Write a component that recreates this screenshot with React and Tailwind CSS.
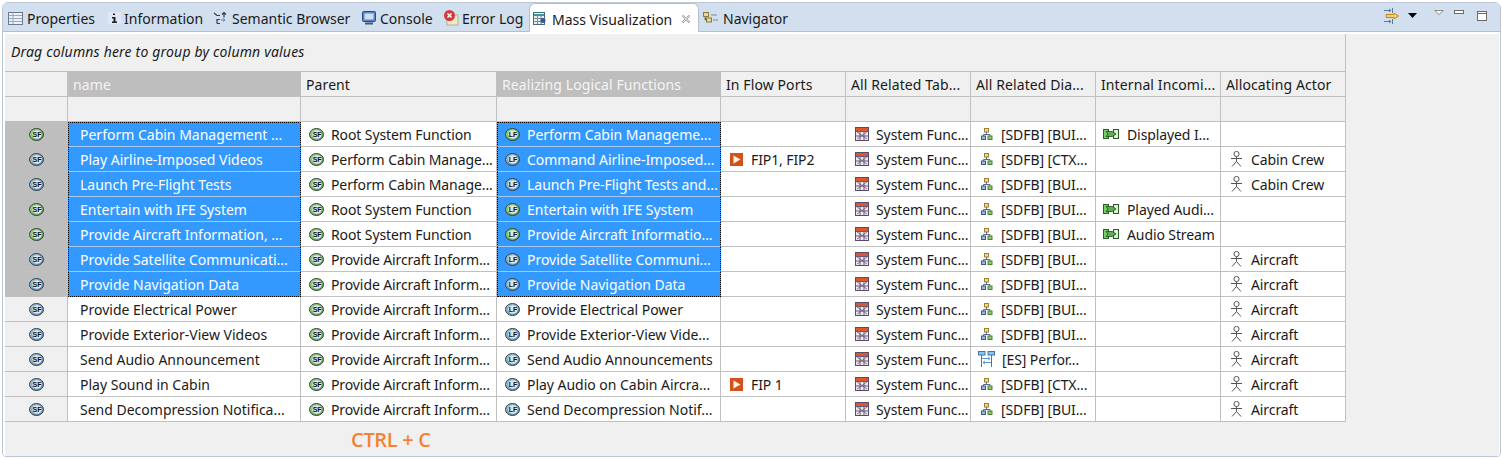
import React from "react";

const Oval = ({ c1, c2, label, stroke = "#34423e" }) => {
  const id = "g" + c1.slice(1) + label;
  return (
    <svg width="15" height="13" viewBox="0 0 15 13" className="shrink-0">
      <defs>
        <linearGradient id={id} x1="0" y1="0" x2="1" y2="1">
          <stop offset="0" stopColor={c1} />
          <stop offset="1" stopColor={c2} />
        </linearGradient>
      </defs>
      <ellipse cx="7.500" cy="6.500" rx="7" ry="6" fill={`url(#${id})`} stroke={stroke} strokeWidth="1" />
      <ellipse cx="8" cy="6.500" rx="4.800" ry="4.200" fill="#dfe8e4" />
      <text x="8" y="9" textAnchor="middle" fontSize="7" fontWeight="700" fontFamily="Liberation Sans, sans-serif" fill="#111">{label}</text>
    </svg>
  );
};
const SFG = () => <Oval c1="#a5dc8e" c2="#4f9a45" label="SF" />;
const SFB = () => <Oval c1="#a9c8ea" c2="#4f7fb5" label="SF" />;
const LFG = () => <Oval c1="#a5dc8e" c2="#4f9a45" label="LF" />;
const LFB = () => <Oval c1="#a9c8ea" c2="#4f7fb5" label="LF" />;

const TableIcon = () => (
  <svg width="14" height="14" viewBox="0 0 14 14" className="shrink-0">
    <rect x="0.500" y="0.500" width="13" height="13" fill="#ece8ee" stroke="#5a4a6a" />
    <rect x="1" y="1" width="12" height="3" fill="#d9592c" />
    <path d="M1 4.500h12M1 9h12M5 4v9M9 4v9" stroke="#6a5a7a" strokeWidth="1" />
    <path d="M2 5l10 7M12 5L2 12" stroke="#6a5a7a" strokeWidth="0.800" />
  </svg>
);
const DiagIcon = () => (
  <svg width="12" height="12" viewBox="0 0 12 12" className="shrink-0">
    <rect x="3.500" y="0.500" width="4" height="3.500" fill="#f0d890" stroke="#a08030" />
    <path d="M5.500 4v2.500M2.500 8V6.500h6.500V8" fill="none" stroke="#5a6a90" />
    <rect x="0.500" y="8" width="4" height="3.500" fill="#9ab8e0" stroke="#3a5a90" />
    <rect x="7" y="8" width="4" height="3.500" fill="#90c870" stroke="#4a8030" />
  </svg>
);
const EsIcon = () => (
  <svg width="17" height="17" viewBox="0 0 17 17" className="shrink-0">
    <rect x="0.500" y="0.500" width="6.500" height="3.500" fill="#8ec0e8" stroke="#3a7ab0" />
    <rect x="10" y="0.500" width="6.500" height="3.500" fill="#8ec0e8" stroke="#3a7ab0" />
    <path d="M3.500 4v12M13.500 4v12" stroke="#3a7ab0" />
    <path d="M4 7.500h8M10 5.800l2 1.700-2 1.700M13 11.500H5M7 9.800l-2 1.700 2 1.700" fill="none" stroke="#5a9ad0" />
  </svg>
);
const PortIcon = () => (
  <svg width="13" height="13" viewBox="0 0 13 13" className="shrink-0">
    <rect width="13" height="13" fill="#d2511c" />
    <path d="M3.500 2.500l7 4-7 4z" fill="#fff2e0" />
  </svg>
);
const ExchIcon = () => (
  <svg width="16" height="10" viewBox="0 0 16 10" className="shrink-0">
    <rect x="0.500" y="0.500" width="5" height="9" fill="#7ccc6c" stroke="#2c5a2c" />
    <rect x="10.500" y="0.500" width="5" height="9" fill="#dff0da" stroke="#2c5a2c" />
    <path d="M3 2.500h6.500L13 5 9.500 7.500H3l2-2.500z" fill="#5cb04c" stroke="#1c4a1c" strokeWidth="0.800" />
  </svg>
);
const ActorIcon = () => (
  <svg width="13" height="16" viewBox="0 0 13 16" className="shrink-0">
    <circle cx="6.500" cy="3" r="2.600" fill="#fff" stroke="#555" />
    <path d="M6.500 5.500v5M1 7.500h11M6.500 10.500L2 15.500M6.500 10.500L11 15.500" fill="none" stroke="#555" />
  </svg>
);

const cols = [
  ["name", true],
  ["Parent", false],
  ["Realizing Logical Functions", true],
  ["In Flow Ports", false],
  ["All Related Tab...", false],
  ["All Related Dia...", false],
  ["Internal Incomi...", false],
  ["Allocating Actor", false],
];

const data = [
  { n: "Perform Cabin Management ...", pg: "Root System Function", r: "Perform Cabin Manageme...", lf: "g", sf: "g", d: "[SDFB] [BUI...", e: "Displayed I..." },
  { n: "Play Airline-Imposed Videos", pg: "Perform Cabin Manage...", r: "Command Airline-Imposed...", lf: "b", sf: "b", pt: "FIP1, FIP2", d: "[SDFB] [CTX...", a: "Cabin Crew" },
  { n: "Launch Pre-Flight Tests", pg: "Perform Cabin Manage...", r: "Launch Pre-Flight Tests and...", lf: "b", sf: "b", d: "[SDFB] [BUI...", a: "Cabin Crew" },
  { n: "Entertain with IFE System", pg: "Root System Function", r: "Entertain with IFE System", lf: "g", sf: "g", d: "[SDFB] [BUI...", e: "Played Audi..." },
  { n: "Provide Aircraft Information, ...", pg: "Root System Function", r: "Provide Aircraft Informatio...", lf: "g", sf: "g", d: "[SDFB] [BUI...", e: "Audio Stream" },
  { n: "Provide Satellite Communicati...", pg: "Provide Aircraft Inform...", r: "Provide Satellite Communi...", lf: "b", sf: "b", d: "[SDFB] [BUI...", a: "Aircraft" },
  { n: "Provide Navigation Data", pg: "Provide Aircraft Inform...", r: "Provide Navigation Data", lf: "b", sf: "b", d: "[SDFB] [BUI...", a: "Aircraft" },
  { n: "Provide Electrical Power", pg: "Provide Aircraft Inform...", r: "Provide Electrical Power", lf: "b", sf: "b", d: "[SDFB] [BUI...", a: "Aircraft" },
  { n: "Provide Exterior-View Videos", pg: "Provide Aircraft Inform...", r: "Provide Exterior-View Vide...", lf: "b", sf: "b", d: "[SDFB] [BUI...", a: "Aircraft" },
  { n: "Send Audio Announcement", pg: "Provide Aircraft Inform...", r: "Send Audio Announcements", lf: "b", sf: "b", d: "[ES] Perfor...", es: true, a: "Aircraft" },
  { n: "Play Sound in Cabin", pg: "Provide Aircraft Inform...", r: "Play Audio on Cabin Aircra...", lf: "b", sf: "b", pt: "FIP 1", d: "[SDFB] [CTX...", a: "Aircraft" },
  { n: "Send Decompression Notifica...", pg: "Provide Aircraft Inform...", r: "Send Decompression Notif...", lf: "b", sf: "b", d: "[SDFB] [BUI...", a: "Aircraft" },
];

const grid = "grid grid-cols-[63px_233px_196px_224px_125px_125px_125px_125px_125px] w-[1341px]";
const cell = "h-[25px] flex items-center whitespace-nowrap overflow-hidden border-r border-b border-[#c0c0c0]";

const tabs = [
  ["Properties", <svg key="i" width="15" height="13" viewBox="0 0 15 13"><rect x="0.500" y="0.500" width="14" height="12" fill="#eef2f8" stroke="#6a7a90" /><path d="M1 3.500h13M1 6.500h13M1 9.500h13M5 1v11" stroke="#9aa8bc" /></svg>, "w-[105px] pl-[5px] gap-[4px]"],
  ["Information", <svg key="i" width="13" height="14" viewBox="0 0 13 14"><rect x="0" y="1" width="13" height="12" fill="#dfe8f4" /><path d="M5 2.500h2V4H5zM4 6h3.500v4.500H9V12H4v-1.500h1.500V7.500H4z" fill="#222" /></svg>, "w-[105px] gap-[3px]"],
  ["Semantic Browser", <svg key="i" width="15" height="14" viewBox="0 0 15 14" fill="none"><path d="M1 2l3 2.500h3M7 8.500H4v4M4 12.500h3M11 1.500v5M9 3.500l2-2 2 2" stroke="#3a3a3a" strokeWidth="1.200" /><path d="M8 9h4M10 7.500l2 1.500-2 1.500" stroke="#5a8ac0" /></svg>, "w-[149px] gap-[4px]"],
  ["Console", <svg key="i" width="14" height="14" viewBox="0 0 14 14"><rect x="0.500" y="0.500" width="13" height="10" rx="1" fill="#5a86c8" stroke="#2a4a80" /><rect x="2.500" y="2.500" width="9" height="6" fill="#cfe0f4" /><path d="M3 12.500h8" stroke="#4a5a70" strokeWidth="2" /></svg>, "w-[81px] gap-[4px]"],
  ["Error Log", <svg key="i" width="16" height="16" viewBox="0 0 16 16"><rect x="4" y="5" width="11" height="10" fill="#f0e8c8" stroke="#b8b090" /><circle cx="6.500" cy="5.500" r="5.500" fill="#d83838" /><path d="M4.500 3.500l4 4M8.500 3.500l-4 4" stroke="#fff" strokeWidth="1.500" /></svg>, "w-[86px] gap-[3px]"],
];

const selBase = "bg-[#3399ff] text-white border-b-[#a9c9ea] border-l border-r-black border-l-black [border-left-style:dotted] [border-right-style:dotted]";

export default function App() {
  return (
    <div className="w-[1502px] h-[458px] bg-white font-['Noto_Sans',sans-serif] text-[14px] text-[#1a1a1a] overflow-hidden pt-[2px] pl-[2px] pr-[1px] pb-[1px]">
      <div className="h-[455px] border border-[#bcc6d6] rounded-tr-[6px] rounded-tl-[6px] rounded-b-[4px] overflow-hidden flex flex-col">
        <div className="h-[29px] shrink-0 bg-[#d1dfee] border-b border-[#b4c0d2] flex items-center justify-between relative">
          <div className="flex items-end h-full">
            {tabs.map(([t, ic, c]) => (
              <div key={t} className={"flex items-center h-[28px] pt-[2px] " + c}>
                {ic}
                <span>{t}</span>
              </div>
            ))}
            <div className="flex items-center w-[170px] h-[29px] mb-[-1px] pt-[2px] bg-white border border-b-0 border-[#b4c0d2] rounded-t-[6px] pl-[3px] gap-[4px]">
              <svg width="15" height="14" viewBox="0 0 15 14"><rect x="0.500" y="0.500" width="11" height="12" fill="#e8f0f0" stroke="#4a6a7a" /><path d="M1 3h10" stroke="#3a9a9a" strokeWidth="2" /><path d="M1 6.500h10M1 9.500h10M4.500 4v8M8 4v8" stroke="#7a8a9a" /><circle cx="10" cy="8.500" r="2.500" fill="#3a5aa0" /></svg>
              <span>Mass Visualization</span>
              <svg width="10" height="10" viewBox="0 0 11 11" className="ml-[5px] shrink-0" fill="none"><path d="M1.500 1.500l8 8M9.500 1.500l-8 8" stroke="#9a9a9a" strokeWidth="2.200" /><path d="M1.500 1.500l8 8M9.500 1.500l-8 8" stroke="#f4f4f4" strokeWidth="0.800" /></svg>
            </div>
            <div className="flex items-center h-[28px] pt-[2px] pl-[4px] gap-[5px]">
              <svg width="15" height="12" viewBox="0 0 15 12"><rect x="0.500" y="0.500" width="5" height="4" fill="#f0d890" stroke="#8a7a40" /><rect x="3.500" y="6" width="5" height="4" fill="#f0d890" stroke="#8a7a40" /><path d="M2 5v3h1.500M8 3h6M10 8h5" stroke="#7a8a9a" /></svg>
              <span>Navigator</span>
            </div>
          </div>
          <div className="flex items-center pr-[13px] pb-[3px]">
            <svg width="16" height="16" viewBox="0 0 16 16" fill="none"><path d="M0 2.500h7M5 1l2 1.500L5 4M8.500 0v5M0 13.500h7M5 12l2 1.500L5 15M8.500 11v5" stroke="#5a7a9a" /><path d="M2 6.500h8V5l4.500 3-4.500 3V9.500H2z" fill="#f4d070" stroke="#c08a10" /></svg>
            <svg width="9" height="5" viewBox="0 0 9 5" className="ml-[8px]"><path d="M0 0h9L4.500 5z" fill="#000" /></svg>
            <svg width="10" height="5" viewBox="0 0 10 5" className="ml-[17px] mb-[6px]"><path d="M0.700 0.500h8.600L5 4.500z" fill="#fff" stroke="#8a8a8a" /></svg>
            <svg width="10" height="4" viewBox="0 0 10 4" className="ml-[10px] mb-[7px]"><rect x="0.500" y="0.500" width="9" height="3" fill="#fff" stroke="#6a6a6a" /></svg>
            <svg width="10" height="10" viewBox="0 0 10 10" className="ml-[13px]"><rect x="0.500" y="0.500" width="9" height="9" fill="#fff" stroke="#6a6a6a" /><path d="M0.500 2.500h9" stroke="#6a6a6a" /></svg>
          </div>
        </div>
        <div className="flex-1 bg-white pt-[2px] pl-[2px] pr-[1px] min-h-0">
          <div className="h-full bg-[#f0f0f0]">
            <div className="w-[1341px] h-[38px] flex items-center border-r border-b border-[#c0c0c0] pl-[6px] pb-[3px] italic text-[14px] tracking-[0.18px]">
              Drag columns here to group by column values
            </div>
            <div className={grid}>
              <div className={cell} />
              {cols.map(([t, sel]) => (
                <div key={t} className={cell + " pl-[5px] tracking-[0.1px] " + (sel ? "bg-[#bebebe] text-[#f4f4f4] border-r-[#bebebe]" : "")}>
                  {t}
                </div>
              ))}
              <div className={cell} />
              {cols.map(([t]) => <div key={t} className={cell} />)}
              {data.map((r, i) => {
                const sel = i < 7;
                const selCell =
                  cell + " " + selBase +
                  (i === 0 ? " border-t border-t-black [border-top-style:dotted]" : "") +
                  (i === 6 ? " border-b-black [border-bottom-style:dotted]" : "");
                const norm = cell + " bg-white";
                return (
                  <React.Fragment key={i}>
                    <div className={cell + " justify-center " + (sel ? "bg-[#bebebe]" : "")}>
                      {r.sf === "g" ? <SFG /> : <SFB />}
                    </div>
                    <div className={(sel ? selCell + " pl-[11px]" : norm + " pl-[12px]")}>{r.n}</div>
                    <div className={norm + " pl-[8px] gap-[7px] tracking-[-0.1px]"}>
                      <SFG />
                      <span>{r.pg}</span>
                    </div>
                    <div className={(sel ? selCell + " pl-[7px]" : norm + " pl-[8px]") + " gap-[7px] tracking-[-0.03px]"}>
                      {r.lf === "g" ? <LFG /> : <LFB />}
                      <span>{r.r}</span>
                    </div>
                    <div className={norm + " pl-[9px] gap-[8px] tracking-[-0.1px]"}>
                      {r.pt ? <><PortIcon /><span>{r.pt}</span></> : null}
                    </div>
                    <div className={norm + " pl-[9px] gap-[7px] tracking-[-0.1px]"}>
                      <TableIcon /><span>System Func...</span>
                    </div>
                    <div className={norm + " pl-[10px] gap-[8px] tracking-[-0.1px]"}>
                      {r.es ? <span className="ml-[-3px] mr-[-1px] flex"><EsIcon /></span> : <DiagIcon />}
                      <span>{r.d}</span>
                    </div>
                    <div className={norm + " pl-[7px] gap-[8px] tracking-[-0.1px]"}>
                      {r.e ? <><ExchIcon /><span>{r.e}</span></> : null}
                    </div>
                    <div className={norm + " pl-[9px] gap-[8px] tracking-[-0.1px]"}>
                      {r.a ? <><ActorIcon /><span>{r.a}</span></> : null}
                    </div>
                  </React.Fragment>
                );
              })}
            </div>
            <div className="pl-[346px] pt-[5px] text-[#f58232] font-semibold text-[20px] leading-[26px] font-['Open_Sans',sans-serif] tracking-[-0.3px]">
              CTRL + C
            </div>
          </div>
        </div>
      </div>
    </div>
  );
}
